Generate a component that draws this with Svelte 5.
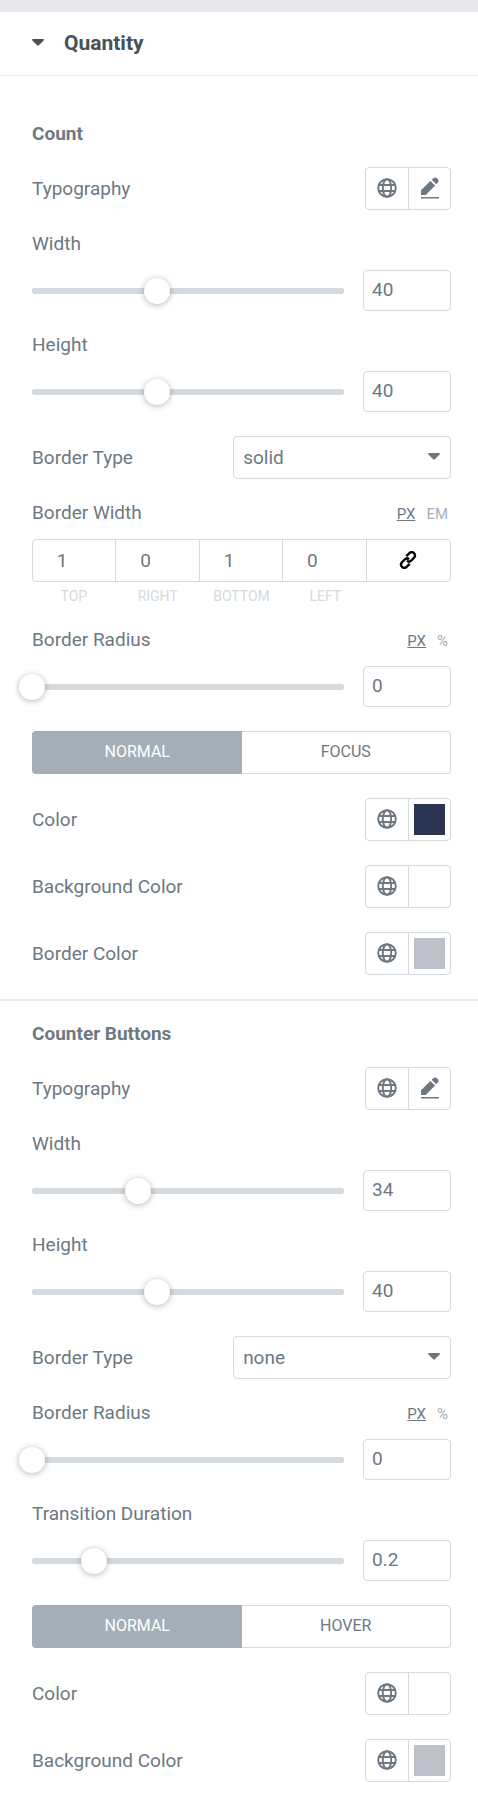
<script>
	let open = $state(true);

	let count = $state({
		width: 40,
		height: 40,
		borderType: "solid",
		borderUnit: "PX",
		border: { top: 1, right: 0, bottom: 1, left: 0 },
		radius: 0,
		radiusUnit: "PX",
		tab: "Normal",
		color: "#2b3553",
		background: "#ffffff",
		borderColor: "#bec0ca",
	});

	let buttons = $state({
		width: 34,
		height: 40,
		borderType: "none",
		radius: 0,
		radiusUnit: "PX",
		duration: 0.2,
		tab: "Normal",
		color: "#ffffff",
		background: "#bec0ca",
	});

	const borderTypes = ["none", "solid", "double", "dotted", "dashed"];
	const sides = ["top", "right", "bottom", "left"];
</script>

{#snippet caret()}
	<svg class="caret" viewBox="0 0 12 7" aria-hidden="true">
		<path d="M.9 0h10.2c.8 0 1.1.9.6 1.4L6.8 6.3c-.5.5-1.1.5-1.6 0L.3 1.4C-.2.9.1 0 .9 0z" />
	</svg>
{/snippet}

{#snippet globe(label)}
	<button type="button" class="icon" aria-label="{label} globals">
		<svg viewBox="0 0 20 20" width="20" height="20" class="stroke">
			<circle cx="10" cy="10" r="8.8" />
			<ellipse cx="10" cy="10" rx="4.2" ry="8.8" />
			<path d="M1.8 7h16.4M1.8 13h16.4" />
		</svg>
	</button>
{/snippet}

{#snippet typography()}
	<div class="row">
		<span>Typography</span>
		<div class="pair">
			{@render globe("Typography")}
			<button type="button" class="icon" aria-label="Edit typography">
				<svg viewBox="0 0 18 22" width="18" height="22">
					<path d="M0 18v-4.700L9.400 3.900l4.700 4.700L4.700 18z" />
					<path d="M10.700 2.800l1.500-1.500c1.200-1.200 2.600-1.200 3.800 0l.7.7c1.200 1.200 1.200 2.600 0 3.800l-1.500 1.500z" />
					<path d="M0 20h18v1.500H0z" />
				</svg>
			</button>
		</div>
	</div>
{/snippet}

{#snippet units(group, key, options)}
	<div class="units">
		{#each options as unit}
			<button
				type="button"
				class:active={group[key] === unit}
				aria-pressed={group[key] === unit}
				onclick={() => (group[key] = unit)}>{unit}</button
			>
		{/each}
	</div>
{/snippet}

{#snippet slider(id, label, group, key, max = 100, step = 1, unitOptions = null)}
	<div class="control">
		<div class="head">
			<label for={id}>{label}</label>
			{#if unitOptions}
				{@render units(group, key + "Unit", unitOptions)}
			{/if}
		</div>
		<div class="slider">
			<div class="track">
				<input type="range" min="0" {max} {step} aria-label={label} bind:value={group[key]} />
			</div>
			<input {id} class="number" type="number" min="0" {step} bind:value={group[key]} />
		</div>
	</div>
{/snippet}

{#snippet borderType(id, group)}
	<div class="row">
		<label for={id}>Border Type</label>
		<div class="select">
			<select {id} bind:value={group.borderType}>
				{#each borderTypes as type}
					<option value={type}>{type}</option>
				{/each}
			</select>
			{@render caret()}
		</div>
	</div>
{/snippet}

{#snippet tabs(group, options)}
	<div class="tabs">
		{#each options as tab}
			<button
				type="button"
				class:active={group.tab === tab}
				aria-pressed={group.tab === tab}
				onclick={() => (group.tab = tab)}>{tab}</button
			>
		{/each}
	</div>
{/snippet}

{#snippet color(id, label, group, key)}
	<div class="row">
		<label for={id}>{label}</label>
		<div class="pair">
			{@render globe(label)}
			<input {id} type="color" bind:value={group[key]} />
		</div>
	</div>
{/snippet}

<div class="panel">
	<button type="button" class="title" aria-expanded={open} onclick={() => (open = !open)}>
		{@render caret()}
		Quantity
	</button>

	{#if open}
		<section class="first">
			<h3>Count</h3>
			{@render typography()}
			{@render slider("count-width", "Width", count, "width")}
			{@render slider("count-height", "Height", count, "height")}
			{@render borderType("count-border-type", count)}

			<div class="control">
				<div class="head">
					<span>Border Width</span>
					{@render units(count, "borderUnit", ["PX", "EM"])}
				</div>
				<div class="dimensions">
					{#each sides as side}
						<input id="border-{side}" type="number" min="0" bind:value={count.border[side]} />
					{/each}
					<button type="button" aria-label="Link values together">
						<svg viewBox="0 0 18 18" width="18" height="18" class="link">
							<path d="M7.300 5.200l2.900-2.900c1.500-1.500 3.400-1.500 4.700-.2 1.500 1.500 1.500 3.300 0 4.800l-2.600 2.600c-1.300 1.300-3.100 1.300-4.300.2" />
							<path d="M10.700 12.800l-2.900 2.900c-1.500 1.500-3.400 1.500-4.700.2-1.500-1.500-1.500-3.300 0-4.800l2.600-2.600c1.300-1.300 3.100-1.300 4.300-.2" />
						</svg>
					</button>
				</div>
				<div class="captions">
					{#each sides as side}
						<label for="border-{side}">{side}</label>
					{/each}
				</div>
			</div>

			{@render slider("count-radius", "Border Radius", count, "radius", 100, 1, ["PX", "%"])}
			{@render tabs(count, ["Normal", "Focus"])}
			{@render color("count-color", "Color", count, "color")}
			{@render color("count-background", "Background Color", count, "background")}
			{@render color("count-border-color", "Border Color", count, "borderColor")}
		</section>

		<section>
			<h3>Counter Buttons</h3>
			{@render typography()}
			{@render slider("buttons-width", "Width", buttons, "width")}
			{@render slider("buttons-height", "Height", buttons, "height")}
			{@render borderType("buttons-border-type", buttons)}
			{@render slider("buttons-radius", "Border Radius", buttons, "radius", 100, 1, ["PX", "%"])}
			{@render slider("buttons-duration", "Transition Duration", buttons, "duration", 1, 0.1)}
			{@render tabs(buttons, ["Normal", "Hover"])}
			{@render color("buttons-color", "Color", buttons, "color")}
			{@render color("buttons-background", "Background Color", buttons, "background")}
		</section>
	{/if}
</div>

<style>
	:global(body) {
		background: #fff;
	}

	.panel {
		border-top: 12px solid #e6e8ec;
		color: #6d7882;
		font-family: Roboto, Arial, sans-serif;
		font-size: 19px;
		line-height: 22px;
	}

	.panel * {
		box-sizing: border-box;
	}

	button,
	input,
	select {
		margin: 0;
		padding: 0;
		border: 0;
		border-radius: 0;
		background: none;
		color: inherit;
		font: inherit;
	}

	button,
	select {
		cursor: pointer;
	}

	svg {
		display: block;
		fill: currentColor;
	}

	.caret {
		width: 12px;
		height: 7px;
	}

	.stroke {
		fill: none;
		stroke: currentColor;
		stroke-width: 1.9;
	}

	.title {
		display: flex;
		align-items: center;
		gap: 20px;
		width: 100%;
		height: 64px;
		padding: 0 32px 2px;
		border-bottom: 1px solid #e6e8ec;
		color: #495157;
		font-size: 21px;
		font-weight: 700;
	}

	section {
		display: flex;
		flex-direction: column;
		gap: 24px;
		padding: 22px 27px 24px 32px;
		border-top: 2px solid #e6e8ec;
	}

	section.first {
		padding-top: 47px;
		border-top: 0;
	}

	h3 {
		margin: 0 0 -2px;
		font-size: 19px;
		font-weight: 700;
	}

	.row,
	.head {
		display: flex;
		align-items: center;
		justify-content: space-between;
	}

	.head {
		align-items: baseline;
		height: 22px;
		margin-bottom: 14px;
		line-height: 20px;
	}

	.pair {
		display: flex;
		height: 43px;
		border: 1px solid #d5dadf;
		border-radius: 4px;
	}

	.icon {
		display: flex;
		align-items: center;
		justify-content: center;
		width: 42px;
		padding-bottom: 2px;
	}

	.pair > * + * {
		border-left: 1px solid #d5dadf;
	}

	input[type="color"] {
		width: 42px;
		height: 41px;
		padding: 5px;
		appearance: none;
		cursor: pointer;
	}

	input[type="color"]::-webkit-color-swatch-wrapper {
		padding: 0;
	}

	input[type="color"]::-webkit-color-swatch {
		border: 0;
		border-radius: 0;
	}

	.units {
		display: flex;
		gap: 11px;
		padding-right: 3px;
		color: #a4afb7;
		font-size: 15px;
	}

	.units .active {
		color: #6d7882;
		text-decoration: underline;
	}

	.slider {
		display: flex;
		align-items: center;
		gap: 19px;
	}

	.track {
		flex: 1;
		height: 26px;
	}

	/* the thumb's centre reaches both ends of the track */
	input[type="range"] {
		display: block;
		width: calc(100% + 26px);
		height: 26px;
		margin: 0 -13px;
		appearance: none;
	}

	input[type="range"]::-webkit-slider-runnable-track {
		height: 26px;
		background: linear-gradient(#d5dadf, #d5dadf) center / calc(100% - 32px) 6px no-repeat,
			radial-gradient(circle at 16px 13px, #d5dadf 3px, transparent 3px),
			radial-gradient(circle at calc(100% - 16px) 13px, #d5dadf 3px, transparent 3px);
	}

	input[type="range"]::-webkit-slider-thumb {
		width: 26px;
		height: 26px;
		border-radius: 50%;
		background: #fff;
		box-shadow: 0 1px 6px rgba(0, 0, 0, 0.3);
		appearance: none;
	}

	input[type="number"] {
		appearance: textfield;
	}

	input[type="number"]::-webkit-inner-spin-button {
		display: none;
	}

	.number {
		width: 88px;
		height: 41px;
		padding: 0 8px 2px;
		border: 1px solid #d5dadf;
		border-radius: 4px;
	}

	.select {
		position: relative;
		width: 52%;
	}

	select {
		display: block;
		width: 100%;
		height: 43px;
		padding: 0 32px 0 9px;
		border: 1px solid #d5dadf;
		border-radius: 4px;
		appearance: none;
	}

	.select .caret {
		position: absolute;
		top: 17px;
		right: 11px;
		pointer-events: none;
	}

	.dimensions,
	.captions {
		display: grid;
		grid-template-columns: repeat(5, 1fr);
	}

	.dimensions {
		height: 43px;
		border: 1px solid #d5dadf;
		border-radius: 4px;
	}

	.dimensions input {
		width: 100%;
		padding-right: 24px;
		border-right: 1px solid #d5dadf;
		text-align: center;
	}

	.dimensions button {
		display: flex;
		align-items: center;
		justify-content: center;
		padding-bottom: 2px;
		color: #000;
	}

	.link {
		fill: none;
		stroke: currentColor;
		stroke-width: 2.4;
	}

	.captions {
		padding-top: 4px;
		color: #d5dadf;
		font-size: 14px;
		line-height: 20px;
		text-align: center;
		text-transform: uppercase;
	}

	.tabs {
		display: flex;
		height: 43px;
	}

	.tabs button {
		width: 50%;
		padding-bottom: 2px;
		border: 1px solid #d5dadf;
		font-size: 16px;
		text-transform: uppercase;
	}

	.tabs button:first-child {
		border-right: 0;
		border-radius: 4px 0 0 4px;
	}

	.tabs button:last-child {
		border-left: 0;
		border-radius: 0 4px 4px 0;
	}

	.tabs .active {
		border-color: #a4afb7;
		background: #a4afb7;
		color: #fff;
	}
</style>
